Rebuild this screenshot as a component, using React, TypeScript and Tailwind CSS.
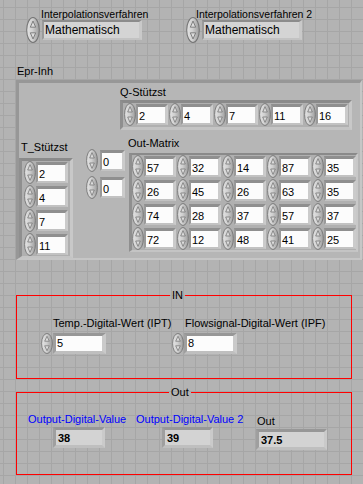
import React from 'react';

// LabVIEW style front panel: rings, cluster with arrays, IN / Out decorations

function Spin({ className = 'w-[12px] h-[23px]' }: { className?: string }) {
  return (
    <svg viewBox="0 0 12 23" preserveAspectRatio="none" className={`block shrink-0 ${className}`}>
      <defs>
        <linearGradient id="spin-g" x1="0" x2="1" y1="0" y2="0">
          <stop offset="0" stopColor="#e4e4e4" />
          <stop offset="0.45" stopColor="#d0d0d0" />
          <stop offset="1" stopColor="#9c9c9c" />
        </linearGradient>
      </defs>
      <ellipse cx="6" cy="11.5" rx="5.4" ry="11" fill="url(#spin-g)" stroke="#747474" strokeWidth="0.9" />
      <path d="M6 3.6 L8.3 9 H3.7 Z" fill="#dcdcdc" stroke="#6a6a6a" strokeWidth="0.7" />
      <path d="M6 19.4 L8.3 14 H3.7 Z" fill="#dcdcdc" stroke="#6a6a6a" strokeWidth="0.7" />
    </svg>
  );
}

function Num({ v, boxW = 'w-[27px]', gap = 'ml-0' }: { v: string; boxW?: string; gap?: string }) {
  return (
    <div className="flex h-[23px] items-center">
      <Spin />
      <div className={`${gap} border-t-[3px] border-l-2 border-r-[3px] border-b-2 border-t-[#8f8f8f] border-l-[#999999] border-r-[#cbcbcb] border-b-[#c2c2c2]`}>
        <div className={`${boxW} h-[16px] overflow-hidden bg-[#fcfcfc] pl-[1px] leading-[18px]`}>{v}</div>
      </div>
    </div>
  );
}

function BigNum({ v }: { v: string }) {
  return (
    <div className="flex items-center">
      <Spin className="w-[12px] h-[21px]" />
      <div className="border-t-[3px] border-l-[3px] border-r-[4px] border-b-[3px] border-t-[#979797] border-l-[#9f9f9f] border-r-[#cacaca] border-b-[#bfbfbf]">
        <div className="h-[15px] w-[46px] overflow-hidden bg-[#fcfcfc] pl-[1px] leading-[15px]">{v}</div>
      </div>
    </div>
  );
}

function Ind({ v, boxW }: { v: string; boxW: string }) {
  return (
    <div className="border-[3px] border-t-[#979797] border-l-[#9f9f9f] border-r-[#cacaca] border-b-[#bfbfbf]">
      <div className={`${boxW} h-[15px] overflow-hidden bg-[#d3d3d3] pl-[2px] font-bold leading-[16px]`}>{v}</div>
    </div>
  );
}

function Ring({ label, labelMl }: { label: string; labelMl: string }) {
  return (
    <div className="flex flex-col">
      <div className={`${labelMl} h-[10px] whitespace-nowrap text-[10.5px] leading-[10px]`}>{label}</div>
      <div className="mt-[1px] flex items-center">
        <Spin className="-my-[3px] w-[14px] h-[26px]" />
        <div className="ml-[2px] border-t-2 border-l-2 border-r-[3px] border-b-2 border-t-[#8c8c8c] border-l-[#9a9a9a] border-r-[#c9c9c9] border-b-[#c3c3c3]">
          <div className="h-[16px] w-[95px] overflow-hidden bg-[#d4d4d4] pl-[1px] text-[12px] leading-[17px]">Mathematisch</div>
        </div>
      </div>
    </div>
  );
}

const arrFrame =
  'border-[3px] border-t-[#8a8a8a] border-l-[#8f8f8f] border-r-[#c8c8c8] border-b-[#c4c4c4] bg-[#b0b0b0]';

const matrix = [
  ['57', '32', '14', '87', '35'],
  ['26', '45', '26', '63', '35'],
  ['74', '28', '37', '57', '37'],
  ['72', '12', '48', '41', '25'],
];

export default function App() {
  return (
    <div className="relative h-[484px] w-[363px] overflow-hidden bg-[#b3b3b3] pt-[9px] font-['Liberation_Sans',Arial,sans-serif] text-[11px] text-black [background-image:linear-gradient(to_right,#a6a6a6_1px,transparent_1px),linear-gradient(to_bottom,#a6a6a6_1px,transparent_1px)] [background-position:3px_7px] [background-size:12px_12px]">
      {/* rings */}
      <div className="flex">
        <div className="ml-[26px] w-[160px] shrink-0">
          <Ring label="Interpolationsverfahren" labelMl="ml-[15px]" />
        </div>
        <div>
          <Ring label="Interpolationsverfahren 2" labelMl="ml-[10px]" />
        </div>
      </div>

      {/* cluster */}
      <div className="ml-[17px] mt-[25px] h-[12px] leading-[12px]">Epr-Inh</div>
      <div className="ml-[16px] mt-[3px] h-[180px] w-[346px] border-t-[3px] border-l-[3px] border-r-2 border-b-2 border-t-[#979797] border-l-[#979797] border-r-[#c6c6c6] border-b-[#c6c6c6] bg-[#b6b6b6]">
        <div className="ml-[101px] flex flex-col items-start">
          <div className="mt-[3px] h-[12px] leading-[12px]">Q-Stützst</div>
          <div className={`mt-[2px] flex gap-[1px] pl-[1px] pr-[1px] pb-[1px] ${arrFrame}`}>
            {['2', '4', '7', '11', '16'].map((v, i) => (
              <Num key={i} v={v} />
            ))}
          </div>
        </div>

        <div className="flex items-start">
          <div className="mt-[11px] flex flex-col items-start">
            <div className="ml-[2px] h-[12px] leading-[12px]">T_Stützst</div>
            <div className={`mt-[5px] flex flex-col gap-[1px] pl-[2px] pr-[2px] border-b-2 ${arrFrame}`}>
              {['2', '4', '7', '11'].map((v, i) => (
                <Num key={i} v={v} />
              ))}
            </div>
          </div>

          <div className="ml-[13px] mt-[19px] flex flex-col gap-[4px]">
            <Num v="0" boxW="w-[20px]" gap="ml-[2px]" />
            <Num v="0" boxW="w-[20px]" gap="ml-[2px]" />
          </div>

          <div className="ml-[3px] mt-[7px] flex flex-col items-start">
            <div className="h-[12px] leading-[12px]">Out-Matrix</div>
            <div className={`ml-[1px] mt-[4px] flex flex-col gap-[1px] border-t-2 border-b-2 border-r-2 ${arrFrame}`}>
              {matrix.map((row, r) => (
                <div key={r} className="flex gap-[1px]">
                  {row.map((v, c) => (
                    <Num key={c} v={v} />
                  ))}
                </div>
              ))}
            </div>
          </div>
        </div>
      </div>

      {/* IN */}
      <fieldset className="ml-[16px] mt-[29px] h-[90px] w-[336px] border border-[#ff0000] p-0">
        <legend className="ml-[153px] px-[2px] leading-[12px]">IN</legend>
        <div className="flex">
          <div className="ml-[24px] w-[131px]">
            <div className="ml-[12px] mt-[16px] h-[12px] whitespace-nowrap leading-[12px]">Temp.-Digital-Wert (IPT)</div>
            <div className="mt-[4px]">
              <BigNum v="5" />
            </div>
          </div>
          <div>
            <div className="ml-[13px] mt-[16px] h-[12px] whitespace-nowrap leading-[12px]">Flowsignal-Digital-Wert (IPF)</div>
            <div className="mt-[4px]">
              <BigNum v="8" />
            </div>
          </div>
        </div>
      </fieldset>

      {/* Out */}
      <fieldset className="ml-[16px] mt-[7px] h-[89px] w-[336px] border border-[#ff0000] p-0">
        <legend className="ml-[152px] px-[2px] leading-[12px]">Out</legend>
        <div className="flex">
          <div className="ml-[11px] w-[108px]">
            <div className="mt-[15px] h-[12px] whitespace-nowrap leading-[12px] text-[#0000ff]">Output-Digital-Value</div>
            <div className="ml-[25px] mt-[2px] w-fit">
              <Ind v="38" boxW="w-[46px]" />
            </div>
          </div>
          <div className="w-[120px]">
            <div className="mt-[15px] h-[12px] whitespace-nowrap leading-[12px] text-[#0000ff]">Output-Digital-Value 2</div>
            <div className="ml-[26px] mt-[2px] w-fit">
              <Ind v="39" boxW="w-[45px]" />
            </div>
          </div>
          <div>
            <div className="ml-[1px] mt-[17px] h-[12px] leading-[12px]">Out</div>
            <div className="mt-[2px] w-fit">
              <Ind v="37.5" boxW="w-[65px]" />
            </div>
          </div>
        </div>
      </fieldset>
    </div>
  );
}
